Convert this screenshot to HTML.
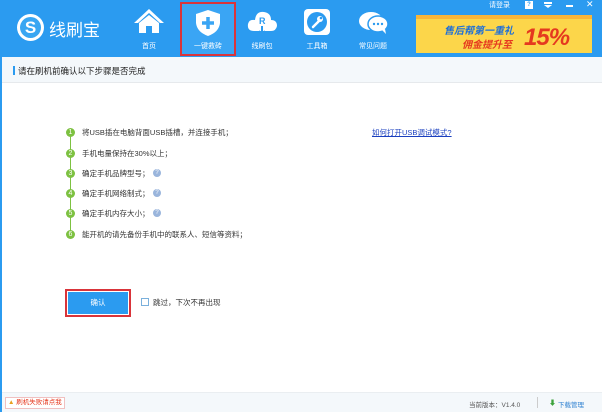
<!DOCTYPE html><html><head><meta charset="utf-8"><style>
*{margin:0;padding:0;box-sizing:border-box}
body{width:602px;height:412px;position:relative;overflow:hidden;background:#fff;font-family:"Liberation Sans","Noto Sans CJK SC",sans-serif;font-size:8px;color:#333}
.a{position:absolute;white-space:nowrap}
.hd{left:0;top:0;width:602px;height:57px;background:#2b9bf0}
.tab{color:#fff;font-size:7px;text-align:center;width:50px}
.step{left:66px;width:9px;height:9px;border-radius:50%;background:#7dc141;color:#fff;font-size:7px;line-height:9px;text-align:center}
.st{left:82px;font-size:7.5px;color:#333;line-height:9px}
.q{width:8px;height:8px;border-radius:50%;background:#9ab5dc;color:#fff;font-size:6px;line-height:8px;text-align:center}
</style></head><body>
<div class="a hd"></div>
<div class="a" style="left:0;top:0;width:2px;height:412px;background:#2b9bf0"></div>
<div class="a" style="left:17px;top:14px;width:27px;height:27px;border-radius:50%;background:#fff"></div>
<div class="a" style="left:20px;top:17px;width:21px;height:21px;border-radius:50%;background:#39a6f2;color:#fff;font-size:17px;font-weight:bold;line-height:21px;text-align:center">S</div>
<div class="a" style="left:49px;top:16px;color:#fff;font-size:17px">线刷宝</div>
<svg class="a" style="left:133px;top:8px" width="32" height="26"><path d="M16 1 L31 15 L27 15 L16 5 L5 15 L1 15Z" fill="#fff"/><path d="M6 15 L16 7 L26 15 L26 25 L19 25 L19 18 L13 18 L13 25 L6 25Z" fill="#fff"/></svg>
<div class="a tab" style="left:124px;top:41px">首页</div>
<div class="a" style="left:180px;top:2px;width:56px;height:54px;border:2px solid #d9343a;background:#3aa5f4"></div>
<svg class="a" style="left:195px;top:9px" width="26" height="28"><path d="M13 1 L25 5 L25 14 Q24 23 13 27 Q2 23 1 14 L1 5Z" fill="#fff"/><path d="M13 8v12M7 14h12" stroke="#3aa5f4" stroke-width="3.5"/></svg>
<div class="a tab" style="left:183px;top:41px">一键救砖</div>
<svg class="a" style="left:246px;top:9px" width="32" height="28"><path d="M8 22 Q1 22 2 15 Q3 10 9 11 Q10 2 18 3 Q25 4 25 11 Q31 11 31 17 Q30 22 25 22Z" fill="#fff"/><text x="13" y="15" font-size="9" font-weight="bold" fill="#2b9bf0" font-family="Liberation Sans">R</text><path d="M16 17v8M13 22l3 4 3-4" stroke="#2b9bf0" stroke-width="2" fill="none"/></svg>
<div class="a tab" style="left:237px;top:41px">线刷包</div>
<div class="a" style="left:304px;top:9px;width:26px;height:26px;border-radius:4px;background:#fff"></div>
<div class="a" style="left:307px;top:12px;width:20px;height:20px;border-radius:50%;background:#2b9bf0"></div>
<svg class="a" style="left:307px;top:12px" width="20" height="20"><path d="M6 15 L12 9" stroke="#fff" stroke-width="2.5" stroke-linecap="round"/><circle cx="13" cy="7" r="3" fill="#fff"/><circle cx="14" cy="6" r="1.3" fill="#2b9bf0"/></svg>
<div class="a tab" style="left:292px;top:41px">工具箱</div>
<svg class="a" style="left:358px;top:11px" width="32" height="24"><ellipse cx="13" cy="10" rx="12" ry="9" fill="#fff"/><ellipse cx="20" cy="13" rx="10" ry="8" fill="#fff" stroke="#2b9bf0" stroke-width="1.5"/><path d="M24 19l4 4-1-5z" fill="#fff"/><circle cx="16" cy="13" r="1.2" fill="#2b9bf0"/><circle cx="20" cy="13" r="1.2" fill="#2b9bf0"/><circle cx="24" cy="13" r="1.2" fill="#2b9bf0"/></svg>
<div class="a tab" style="left:348px;top:41px">常见问题</div>
<div class="a" style="left:416px;top:15px;width:176px;height:38px;background:#fcd64a;overflow:hidden">
<div class="a" style="left:0;top:0;width:176px;height:4px;background:#f8b53a"></div>
<div class="a" style="left:28px;top:7px;color:#1d6fd8;font-size:10px;font-weight:bold;font-style:italic">售后帮第一重礼</div>
<div class="a" style="left:46px;top:21px;color:#e5391f;font-size:10px;font-weight:bold;font-style:italic">佣金提升至</div>
<div class="a" style="left:108px;top:9px;color:#e5391f;font-size:24px;font-weight:bold;font-style:italic;letter-spacing:-1px">15%</div>
</div>
<div class="a" style="left:489px;top:0;color:#fff;font-size:7px">请登录</div>
<div class="a" style="left:525px;top:1px;width:8px;height:8px;background:#fff;color:#2b9bf0;font-size:6px;text-align:center;line-height:8px;font-weight:bold">?</div>
<div class="a" style="left:544px;top:2px;width:8px;height:2px;background:#fff"></div>
<div class="a" style="left:544px;top:5px;border-left:4px solid transparent;border-right:4px solid transparent;border-top:3px solid #fff"></div>
<div class="a" style="left:566px;top:5px;width:7px;height:1.5px;background:#fff"></div>
<div class="a" style="left:586px;top:-1px;color:#fff;font-size:9px">✕</div>
<div class="a" style="left:2px;top:57px;width:600px;height:26px;background:#f4f8fb;border-bottom:1px solid #e6e9ec"></div>
<div class="a" style="left:13px;top:66px;width:2px;height:9px;background:#2b9bf0"></div>
<div class="a" style="left:18px;top:65px;font-size:8.5px;color:#222">请在刷机前确认以下步骤是否完成</div>
<div class="a" style="left:70px;top:136px;width:1px;height:100px;background:#7dc141"></div>
<div class="a step" style="top:128px">1</div><div class="a st" style="top:128px">将USB插在电脑背面USB插槽，并连接手机；</div>
<div class="a step" style="top:149px">2</div><div class="a st" style="top:149px">手机电量保持在30%以上；</div>
<div class="a step" style="top:169px">3</div><div class="a st" style="top:169px">确定手机品牌型号；</div><div class="a q" style="left:153px;top:169px">?</div>
<div class="a step" style="top:189px">4</div><div class="a st" style="top:189px">确定手机网络制式；</div><div class="a q" style="left:153px;top:189px">?</div>
<div class="a step" style="top:209px">5</div><div class="a st" style="top:209px">确定手机内存大小；</div><div class="a q" style="left:153px;top:209px">?</div>
<div class="a step" style="top:230px">6</div><div class="a st" style="top:230px">能开机的请先备份手机中的联系人、短信等资料；</div>
<div class="a" style="left:372px;top:127px;font-size:7.5px;color:#1a3fbf;text-decoration:underline">如何打开USB调试模式?</div>
<div class="a" style="left:65px;top:289px;width:66px;height:28px;border:2px solid #d9343a"></div>
<div class="a" style="left:68px;top:292px;width:60px;height:22px;background:#2b9bf0;color:#fff;font-size:7.5px;text-align:center;line-height:22px">确认</div>
<div class="a" style="left:141px;top:298px;width:8px;height:8px;border:1px solid #7ab0dc"></div>
<div class="a" style="left:153px;top:297px;font-size:7.5px">跳过，下次不再出现</div>
<div class="a" style="left:2px;top:392px;width:600px;height:20px;background:#f4f8fb;border-top:1px solid #eaeef1"></div>
<div class="a" style="left:5px;top:397px;width:60px;height:12px;border:1px solid #f0c0c0;background:#fff;font-size:6.5px;color:#e5391f;line-height:10px;padding-left:2px"><span style="color:#e8a020">▲</span> 刷机失败请点我</div>
<div class="a" style="left:469px;top:399px;font-size:6.5px;color:#555">当前版本：V1.4.0</div>
<div class="a" style="left:537px;top:397px;width:1px;height:11px;background:#ccc"></div>
<div class="a" style="left:549px;top:398px;font-size:7px;color:#3ca33c">⬇</div>
<div class="a" style="left:558px;top:399px;font-size:6.5px;color:#2b7fd0">下载管理</div>
</body></html>
